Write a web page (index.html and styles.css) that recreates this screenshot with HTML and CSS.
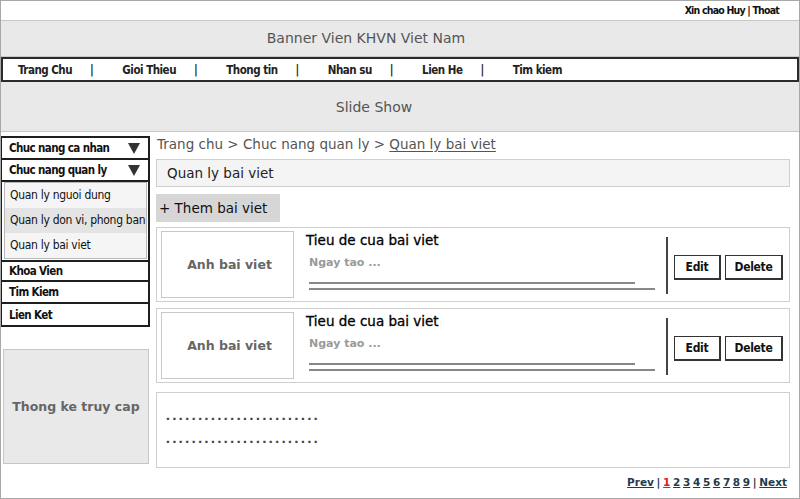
FILE: index.html
```html
<!DOCTYPE html>
<html>
<head>
<meta charset="utf-8">
<link rel="stylesheet" href="styles.css">
</head>
<body>
<div class="page">
  <div class="topbar">Xin chao Huy | Thoat</div>
  <div class="banner">Banner Vien KHVN Viet Nam</div>
  <div class="nav">
    <span class="nav-item">Trang Chu</span><span class="sep">|</span>
    <span class="nav-item">Gioi Thieu</span><span class="sep">|</span>
    <span class="nav-item">Thong tin</span><span class="sep">|</span>
    <span class="nav-item">Nhan su</span><span class="sep">|</span>
    <span class="nav-item">Lien He</span><span class="sep">|</span>
    <span class="nav-item">Tim kiem</span>
  </div>
  <div class="slide">Slide Show</div>
  <div class="main">
    <aside class="sidebar">
      <div class="accordion">
        <div class="acc-row">Chuc nang ca nhan<span class="arrow"></span></div>
        <div class="acc-row">Chuc nang quan ly<span class="arrow"></span></div>
        <div class="submenu">
          <div class="sub-item">Quan ly nguoi dung</div>
          <div class="sub-item active">Quan ly don vi, phong ban</div>
          <div class="sub-item">Quan ly bai viet</div>
        </div>
        <div class="acc-row">Khoa Vien</div>
        <div class="acc-row">Tim Kiem</div>
        <div class="acc-row last">Lien Ket</div>
      </div>
      <div class="stats">Thong ke truy cap</div>
    </aside>
    <section class="content">
      <div class="breadcrumb">Trang chu &gt; Chuc nang quan ly &gt; <u>Quan ly bai viet</u></div>
      <div class="title-box">Quan ly bai viet</div>
      <div class="add-btn">+ Them bai viet</div>
      <div class="card">
        <div class="thumb">Anh bai viet</div>
        <div class="info">
          <div class="post-title">Tieu de cua bai viet</div>
          <div class="date">Ngay tao ...</div>
          <div class="line l1"></div>
          <div class="line l2"></div>
        </div>
        <div class="vdiv"></div>
        <div class="actions"><span class="btn edit">Edit</span><span class="btn del">Delete</span></div>
      </div>
      <div class="card">
        <div class="thumb">Anh bai viet</div>
        <div class="info">
          <div class="post-title">Tieu de cua bai viet</div>
          <div class="date">Ngay tao ...</div>
          <div class="line l1"></div>
          <div class="line l2"></div>
        </div>
        <div class="vdiv"></div>
        <div class="actions"><span class="btn edit">Edit</span><span class="btn del">Delete</span></div>
      </div>
      <div class="dots-box">
        <div class="dots">........................</div>
        <div class="dots">........................</div>
      </div>
      <div class="pager">
        <a>Prev</a> | <a class="cur">1</a> <a>2</a> <a>3</a> <a>4</a> <a>5</a> <a>6</a> <a>7</a> <a>8</a> <a>9</a> | <a>Next</a>
      </div>
    </section>
  </div>
</div>
</body>
</html>
```
FILE: styles.css
```css
* { box-sizing: border-box; }
html, body { margin: 0; padding: 0; background: #fff; }
.page {
  width: 800px; height: 499px;
  border: 1px solid #a8a8a8;
  overflow: hidden;
  font-family: "DejaVu Sans", sans-serif;
}
.topbar, .nav, .accordion, .actions {
  font-family: "DejaVu Sans", sans-serif;
  font-stretch: condensed;
}
.topbar {
  height: 19px;
  text-align: right;
  padding-right: 20px;
  font-weight: bold;
  font-size: 10.5px;
  line-height: 19px;
  color: #111;
  letter-spacing: -0.8px;
}
.banner {
  height: 37px;
  background: #e9e9e9;
  border-top: 1px solid #c8c8c8;
  border-bottom: 1px solid #c8c8c8;
  text-align: center;
  line-height: 35px;
  font-size: 14px;
  color: #555;
  padding-right: 68px;
}
.nav {
  height: 25px;
  border: 2px solid #2b2b2b;
  display: flex;
  align-items: center;
  padding-left: 15px;
  font-weight: bold;
  font-size: 11.5px;
  color: #222;
  letter-spacing: -0.5px;
}
.nav-item { white-space: nowrap; }
.sep { margin: 0 29px 0 18px; color: #222; }
.slide {
  height: 50px;
  background: #e9e9e9;
  border-bottom: 1px solid #c8c8c8;
  text-align: center;
  line-height: 50px;
  font-size: 14px;
  color: #555;
  padding-right: 52px;
}
.main {
  display: flex;
  padding-top: 3px;
}
.sidebar { width: 149px; flex: none; }
.accordion {
  margin-top: 1px;
  border: 2px solid #1e1e1e;
  border-left-width: 1px;
  font-weight: bold;
  font-size: 11.5px;
  color: #111;
  letter-spacing: -0.6px;
}
.acc-row {
  height: 22px;
  border-bottom: 2px solid #1e1e1e;
  padding-left: 7px;
  padding-right: 8px;
  display: flex;
  align-items: center;
  justify-content: space-between;
  white-space: nowrap;
}
.acc-row.last { border-bottom: none; height: 21px; }
.arrow {
  width: 0; height: 0;
  border-left: 6px solid transparent;
  border-right: 6px solid transparent;
  border-top: 11px solid #333;
}
.submenu {
  border: 1px solid #b8b8b8;
  margin: 0 1px 1px 2px;
  background: #f5f5f5;
  padding: 0;
}
.submenu + .acc-row { border-top: 2px solid #1e1e1e; }
.sub-item {
  height: 25px;
  line-height: 24px;
  padding-left: 5px;
  font-size: 12px;
  font-weight: normal;
  white-space: nowrap;
  letter-spacing: -0.3px;
}
.sub-item.active { background: #e4e4e4; }
.stats {
  margin: 22px 1px 0 2px;
  height: 115px;
  background: #e9e9e9;
  border: 1px solid #c6c6c6;
  display: flex;
  align-items: center;
  justify-content: center;
  font-size: 12.5px;
  font-weight: bold;
  color: #666;
}
.content {
  width: 634px;
  margin-left: 6px;
}
.breadcrumb {
  height: 24px;
  padding-left: 1px;
  padding-top: 1px;
  font-size: 13.5px;
  color: #555;
}
.breadcrumb u { text-decoration-thickness: 1px; text-underline-offset: 2px; }
.title-box {
  height: 28px;
  background: #f4f4f4;
  border: 1px solid #cfcfcf;
  padding-left: 10px;
  line-height: 26px;
  font-size: 13.5px;
  color: #222;
}
.add-btn {
  margin-top: 7px;
  width: 124px;
  height: 28px;
  background: #d6d6d6;
  padding-left: 3px;
  line-height: 28px;
  font-size: 13.5px;
  color: #111;
}
.card {
  margin-top: 5px;
  height: 75px;
  border: 1px solid #cfcfcf;
  display: flex;
  padding: 3px 4px;
}
.card + .card { margin-top: 6px; }
.thumb {
  width: 133px;
  height: 67px;
  border: 1px solid #c8c8c8;
  display: flex;
  align-items: center;
  justify-content: center;
  padding-left: 4px;
  font-size: 12.5px;
  font-weight: bold;
  color: #666;
  flex: none;
}
.info {
  width: 362px;
  padding-left: 12px;
  flex: none;
}
.post-title {
  font-size: 13.5px;
  color: #000;
  padding-top: 1px;
  line-height: 16px;
  -webkit-text-stroke: 0.3px #000;
}
.date {
  font-size: 11px;
  color: #999;
  padding-left: 3px;
  margin-top: 8px;
  font-weight: bold;
}
.line { height: 2px; background: #888; margin-left: 3px; }
.l1 { width: 326px; margin-top: 13px; }
.l2 { width: 346px; margin-top: 4px; }
.vdiv {
  width: 2px;
  background: #444;
  margin: 6px 0 4px 10px;
  flex: none;
}
.actions {
  display: flex;
  align-items: center;
  gap: 4px;
  padding-left: 6px;
  padding-top: 6px;
  font-weight: bold;
  font-size: 12px;
  letter-spacing: -0.3px;
}
.btn {
  height: 25px;
  border: 1px solid #333;
  border-right-width: 2px;
  border-bottom-width: 2px;
  display: flex;
  align-items: center;
  justify-content: center;
  color: #111;
}
.edit { width: 47px; }
.del { width: 58px; }
.dots-box {
  margin-top: 9px;
  height: 76px;
  border: 1px solid #cfcfcf;
  padding: 11px 0 0 7px;
}
.dots {
  font-family: "DejaVu Sans Mono", monospace;
  font-size: 13px;
  letter-spacing: -1.4px;
  font-weight: bold;
  color: #444;
  line-height: 23px;
}
.pager {
  margin-top: 8px;
  text-align: right;
  padding-right: 3px;
  font-family: "DejaVu Sans", Verdana, sans-serif;
  font-weight: bold;
  font-size: 10.5px;
  color: #1f3c4d;
  word-spacing: -1px;
}
.pager a { text-decoration: underline; color: #1f3c4d; }
.pager a.cur { color: #e02020; }
```
